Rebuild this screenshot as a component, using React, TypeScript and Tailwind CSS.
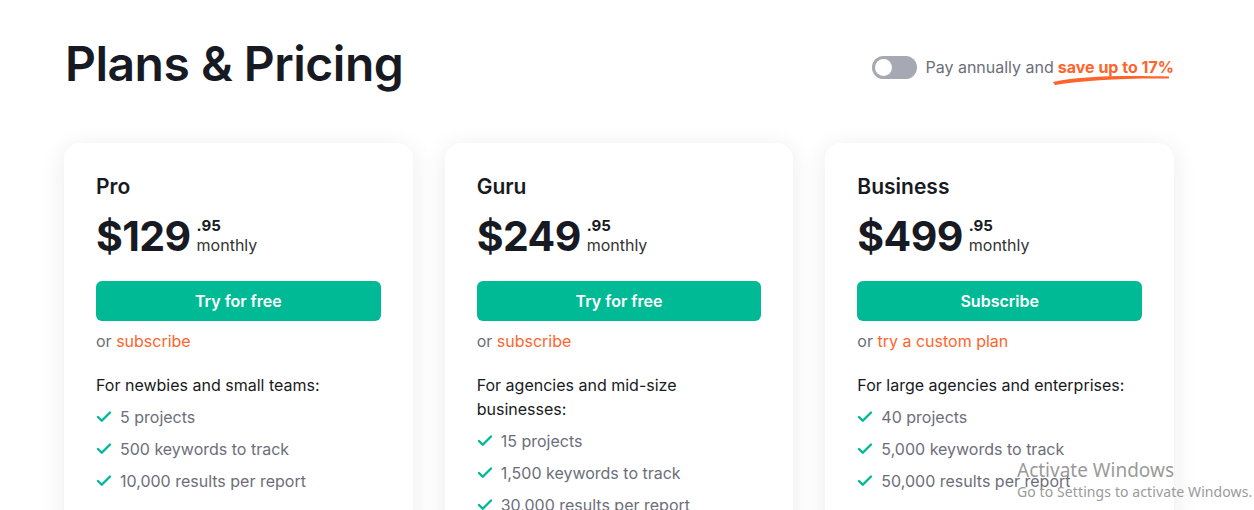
import { Check } from 'lucide-react';

type Plan = {
  name: string;
  price: string;
  cta: string;
  altText: string;
  blurb: string;
  features: string[];
};

const plans: Plan[] = [
  {
    name: 'Pro',
    price: '$129',
    cta: 'Try for free',
    altText: 'subscribe',
    blurb: 'For newbies and small teams:',
    features: ['5 projects', '500 keywords to track', '10,000 results per report'],
  },
  {
    name: 'Guru',
    price: '$249',
    cta: 'Try for free',
    altText: 'subscribe',
    blurb: 'For agencies and mid-size businesses:',
    features: ['15 projects', '1,500 keywords to track', '30,000 results per report'],
  },
  {
    name: 'Business',
    price: '$499',
    cta: 'Subscribe',
    altText: 'try a custom plan',
    blurb: 'For large agencies and enterprises:',
    features: ['40 projects', '5,000 keywords to track', '50,000 results per report'],
  },
];

const PlanCard = ({ plan }: { plan: Plan }) => (
  <div className="w-[349px] h-[420px] rounded-2xl bg-white px-8 pt-[32px] shadow-[0_4px_24px_rgba(30,35,60,0.09)]">
    <h3 className="text-[21px] leading-6 font-semibold text-[#171a22]">{plan.name}</h3>
    <div className="mt-[12px] flex items-start">
      <span className="text-[41px] leading-[50px] font-bold tracking-[-0.6px] text-[#171a22]">{plan.price}</span>
      <div className="ml-[6px] mt-[6px] flex flex-col">
        <span className="text-[15px] leading-[17px] font-bold text-[#171a22]">.95</span>
        <span className="text-[16px] leading-[22px] text-[#333]">monthly</span>
      </div>
    </div>
    <button className="mt-[20px] w-full h-10 rounded-md bg-[#00ba95] text-white text-[16px] font-semibold">
      {plan.cta}
    </button>
    <p className="mt-[10px] text-[16px] leading-5 text-[#6c6e79]">
      or <span className="text-[#ff642d]">{plan.altText}</span>
    </p>
    <p className="mt-[22px] text-[16px] leading-6 text-[#171a22]">{plan.blurb}</p>
    <ul className="mt-[4px] flex flex-col">
      {plan.features.map((f) => (
        <li key={f} className="flex items-center h-8 text-[16px] text-[#6c6e79]">
          <Check size={18} strokeWidth={3.2} className="text-[#00ba95] mr-[7px] -ml-[1px]" />
          {f}
        </li>
      ))}
    </ul>
  </div>
);

export default function App() {
  return (
    <div className="relative h-[510px] overflow-hidden bg-white font-['Inter',sans-serif]">
      <div className="w-[1110px] ml-16">
        <div className="flex items-center justify-between pt-[34px]">
          <h1 className="ml-[1px] text-[48px] leading-[60px] font-semibold tracking-[-0.5px] text-[#171a22]">
            Plans &amp; Pricing
          </h1>
          <div className="flex items-center mt-[6px]">
            <div className="w-[45px] h-[23px] rounded-full bg-[#a6a8b3] p-[3px] flex items-center">
              <div className="w-[17px] h-[17px] rounded-full bg-white" />
            </div>
            <span className="ml-[8px] text-[16px] text-[#6c6e79]">Pay annually and</span>
            <span className="relative ml-[4px] text-[16px] font-bold text-[#ff642d]">
              save up to 17%
              <svg
                className="absolute left-[-6px] top-[18px]"
                width="120"
                height="12"
                viewBox="0 0 120 12"
                fill="none"
              >
                <path
                  d="M1 9 C 25 3.5, 65 2, 117 3.5 L 117 5.5 C 70 5, 30 7.5, 3 12 Z"
                  fill="#ff642d"
                />
              </svg>
            </span>
          </div>
        </div>
        <div className="mt-[49px] flex gap-8">
          {plans.map((p) => (
            <PlanCard key={p.name} plan={p} />
          ))}
        </div>
      </div>
      <div className="absolute left-[1017px] top-[458px] text-[#9a9a9a] font-['Noto_Sans',sans-serif] pointer-events-none">
        <div className="text-[19px] leading-6">Activate Windows</div>
        <div className="text-[14px] leading-5 tracking-[0.1px]">Go to Settings to activate Windows.</div>
      </div>
    </div>
  );
}
